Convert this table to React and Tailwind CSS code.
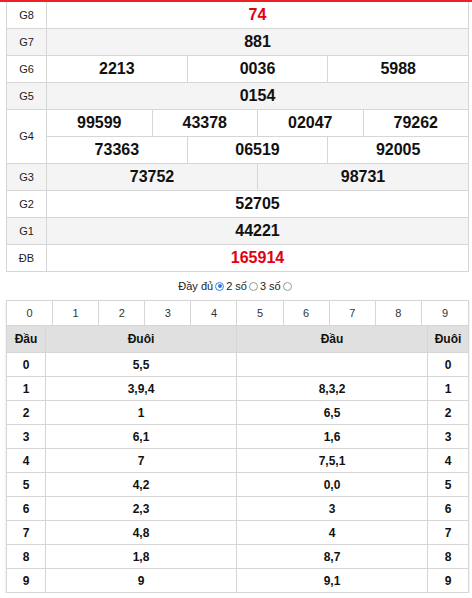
const prizes = [
    { label: "G8", rows: [["74"]], red: true },
    { label: "G7", rows: [["881"]] },
    { label: "G6", rows: [["2213", "0036", "5988"]] },
    { label: "G5", rows: [["0154"]] },
    { label: "G4", rows: [["99599", "43378", "02047", "79262"], ["73363", "06519", "92005"]] },
    { label: "G3", rows: [["73752", "98731"]] },
    { label: "G2", rows: [["52705"]] },
    { label: "G1", rows: [["44221"]] },
    { label: "ĐB", rows: [["165914"]], red: true },
];

const loto = [
    ["0", "5,5", "", "0"],
    ["1", "3,9,4", "8,3,2", "1"],
    ["2", "1", "6,5", "2"],
    ["3", "6,1", "1,6", "3"],
    ["4", "7", "7,5,1", "4"],
    ["5", "4,2", "0,0", "5"],
    ["6", "2,3", "3", "6"],
    ["7", "4,8", "4", "7"],
    ["8", "1,8", "8,7", "8"],
    ["9", "9", "9,1", "9"],
];

const Radio = ({ checked }) => (
    <span
        className={
            "inline-block w-[9px] h-[9px] rounded-full border mx-[2px] align-[-1px] " +
            (checked
                ? "border-[#3b82f6] bg-white p-[1.5px]"
                : "border-[#9a9a9a] bg-white")
        }
    >
        {checked && <span className="block w-full h-full rounded-full bg-[#2f7de1]" />}
    </span>
);

export default function App() {
    return (
        <div className="w-[472px] bg-white text-[#111] font-['Liberation_Sans',Arial,sans-serif]">
            <div className="h-[2px] bg-[#ec2227]" />

            {/* ket qua */}
            <div className="ml-[6px] mr-[3px] border-x border-[#d6d6d6]">
                {prizes.map((p, i) => (
                    <div
                        key={p.label}
                        className={
                            "flex border-b border-[#d6d6d6] " +
                            (i % 2 === 1 ? "bg-[#f4f4f4]" : "bg-white")
                        }
                    >
                        <div className="w-[40px] shrink-0 flex items-center justify-center border-r border-[#d6d6d6] text-[11px] text-[#222]">
                            {p.label}
                        </div>
                        <div className="flex-1">
                            {p.rows.map((row, ri) => (
                                <div
                                    key={ri}
                                    className={
                                        "flex " +
                                        (ri < p.rows.length - 1 ? "h-[27px] border-b border-[#d6d6d6]" : "h-[26px]")
                                    }
                                >
                                    {row.map((n, ci) => (
                                        <div
                                            key={ci}
                                            className={
                                                "flex-1 flex items-center justify-center text-[16px] font-bold " +
                                                (p.red ? "text-[#e3000f] " : "text-[#111] ") +
                                                (ci < row.length - 1 ? "border-r border-[#d6d6d6]" : "")
                                            }
                                        >
                                            {n}
                                        </div>
                                    ))}
                                </div>
                            ))}
                        </div>
                    </div>
                ))}
            </div>

            <div className="h-[28px] flex items-center justify-center text-[11px] text-[#222]">
                Đầy đủ <Radio checked /> 2 số <Radio /> 3 số <Radio />
            </div>

            {/* loto */}
            <div className="ml-[6px] mr-[3px] border-x border-t border-[#d6d6d6] shadow-[0_1px_2px_rgba(0,0,0,0.12)]">
                <div className="grid grid-cols-10 h-[25px] border-b border-[#d6d6d6]">
                    {["0", "1", "2", "3", "4", "5", "6", "7", "8", "9"].map((d, i) => (
                        <div
                            key={d}
                            className={
                                "flex items-center justify-center text-[11px] text-[#333] " +
                                (i < 9 ? "border-r border-[#d6d6d6]" : "")
                            }
                        >
                            {d}
                        </div>
                    ))}
                </div>
                <div className="grid grid-cols-[39px_1fr_1fr_40px] h-[27px] bg-[#e0e0e0] border-b border-[#d6d6d6] text-[12px] font-bold text-[#111]">
                    <div className="flex items-center justify-center border-r border-[#d6d6d6]">Đầu</div>
                    <div className="flex items-center justify-center border-r border-[#d6d6d6]">Đuôi</div>
                    <div className="flex items-center justify-center border-r border-[#d6d6d6]">Đầu</div>
                    <div className="flex items-center justify-center">Đuôi</div>
                </div>
                {loto.map((r) => (
                    <div
                        key={r[0]}
                        className="grid grid-cols-[39px_1fr_1fr_40px] h-[24px] border-b border-[#d6d6d6] text-[12px] font-bold text-[#111]"
                    >
                        <div className="flex items-center justify-center border-r border-[#d6d6d6]">{r[0]}</div>
                        <div className="flex items-center justify-center border-r border-[#d6d6d6]">{r[1]}</div>
                        <div className="flex items-center justify-center border-r border-[#d6d6d6]">{r[2]}</div>
                        <div className="flex items-center justify-center">{r[3]}</div>
                    </div>
                ))}
            </div>
        </div>
    );
}
